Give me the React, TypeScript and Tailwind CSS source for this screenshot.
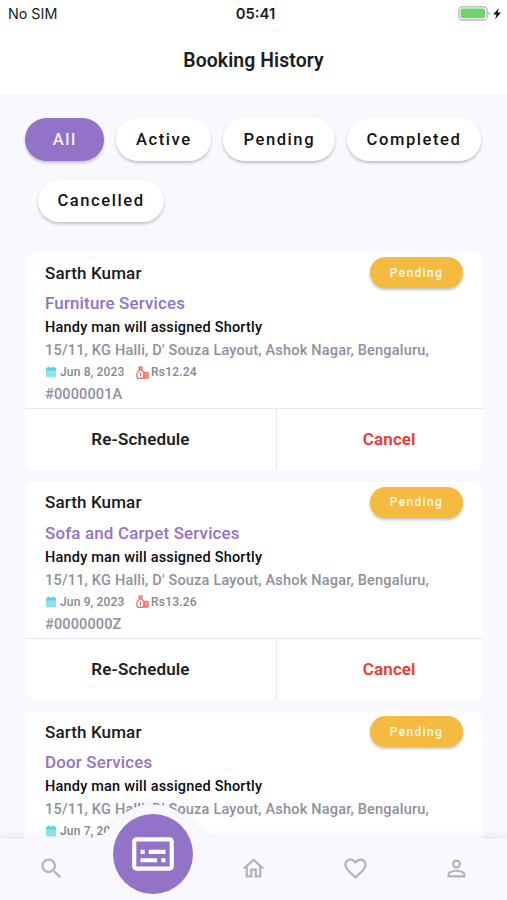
import React from "react";

type Booking = { name: string; service: string; date: string; price: string; id: string; editable: boolean };

const bookings: Booking[] = [
  { name: "Sarth Kumar", service: "Furniture Services", date: "Jun 8, 2023", price: "Rs12.24", id: "#0000001A", editable: true },
  { name: "Sarth Kumar", service: "Sofa and Carpet Services", date: "Jun 9, 2023", price: "Rs13.26", id: "#0000000Z", editable: true },
  { name: "Sarth Kumar", service: "Door Services", date: "Jun 7, 2023", price: "", id: "", editable: false },
];

const filters = [
  { label: "All", size: "w-[78.5px]", active: true },
  { label: "Active", size: "w-[95.5px]" },
  { label: "Pending", size: "w-[111.5px]" },
  { label: "Completed", size: "w-[134px]" },
  { label: "Cancelled", size: "w-[126px] ml-[12.5px]" },
];

function StatusBar() {
  return (
    <div className="grid h-7 grid-cols-3 items-center pl-2 pr-1 font-[Inter] text-[#1c1c1c]">
      <span className="text-[14.3px]">No SIM</span>
      <span className="text-center text-[14.8px] font-semibold">05:41</span>
      <div className="flex items-center justify-end">
        <svg width="45" height="18" viewBox="0 0 45 18">
          <rect x="0.8" y="1.8" width="28.4" height="13.2" rx="3.6" fill="#fff" stroke="#bcb9bf" strokeWidth="1.4" />
          <rect x="2.6" y="3.6" width="24.4" height="9.6" rx="1.6" fill="#6fd56c" />
          <path d="M30.6 6.6v4q1.4-.6 1.4-2t-1.4-2z" fill="#aaa" />
          <path d="M40.8 3l-5.6 6.4h3.3l-1.4 4.8 5.9-6.7h-3.4z" fill="#111" />
        </svg>
      </div>
    </div>
  );
}

function CalendarIcon() {
  return (
    <svg width="12" height="12" viewBox="0 0 12 12">
      <rect x="1" y="1.6" width="10" height="9.8" rx="1.6" fill="#8fe3ee" />
      <path d="M1 4.4V3.2q0-1.6 1.6-1.6h6.8q1.6 0 1.6 1.6v1.2z" fill="#5fd0df" />
      <path d="M3.4.6v2M8.6.6v2" stroke="#5fd0df" strokeWidth="1.2" />
    </svg>
  );
}

function MoneyIcon() {
  return (
    <svg width="13" height="13" viewBox="0 0 13 13" fill="none" stroke="#e8695c">
      <path d="M3.4 3.8C1.6 5.4.7 7.4.7 9.4c0 1.9 1 2.9 2.8 2.9h2.1c1.9 0 2.7-1 2.7-2.9 0-2-.9-4-2.7-5.6z" strokeWidth="1.2" />
      <path d="M3.4 3.6L2.8.9h3.6l-.8 2.7z" fill="#e8695c" fillOpacity=".5" />
      <path d="M4.5 6.4v4M3.6 7.2h1" />
      <rect x="7.8" y="6.2" width="4.6" height="6.1" rx=".6" fill="#e8695c" fillOpacity=".8" strokeWidth=".8" />
      <path d="M8.4 8.3h3.6M8.4 10.3h3.6" stroke="#fff" strokeOpacity=".6" strokeWidth=".5" />
    </svg>
  );
}

function BookingCard({ b }: { b: Booking }) {
  return (
    <article className="h-[218px] w-[457.5px] shrink-0 rounded-[10px] bg-white">
      <div className="flex h-[156px] flex-col pl-5 pr-5 pt-1.5 tracking-[0.2px]">
        <div className="flex h-[30px] items-center justify-between">
          <span className="pt-px text-[17px] font-medium tracking-[0.12px] text-[#1a1a1a]">{b.name}</span>
          <span className="-mt-px flex h-[31px] w-[93px] items-center justify-center rounded-full bg-[#f5bb41] pl-px text-[12px] font-medium tracking-[1.35px] text-[#fffaf0] shadow-[0_2px_3px_rgba(0,0,0,0.24)]">
            Pending
          </span>
        </div>
        <span className="text-[16.9px] font-medium leading-[30px] tracking-[0.18px] text-[#9273c8]">{b.service}</span>
        <span className="text-[14.5px] font-medium leading-5 text-[#0c0c0c]">Handy man will assigned Shortly</span>
        <span className="whitespace-nowrap text-[14.5px] font-medium leading-[25px] tracking-[0.2px] text-[#8e919c]">
          15/11, KG Halli, D' Souza Layout, Ashok Nagar, Bengaluru,
        </span>
        <div className="flex h-[18px] items-center text-[12px] font-medium tracking-[0.16px] text-[#858894]">
          <CalendarIcon />
          <span className="ml-[3px] w-[76px]">{b.date}</span>
          {b.price && (
            <>
              <MoneyIcon />
              <span className="ml-[2px] tracking-[0.2px]">{b.price}</span>
            </>
          )}
        </div>
        <span className="text-[14.5px] font-medium leading-[28px] tracking-[0.14px] text-[#8e919c]">{b.id}</span>
      </div>
      {b.editable && (
        <div className="flex h-[62px] border-t border-[#e9e9ec] text-[17px] font-semibold tracking-[0.15px]">
          <button className="w-[252px] border-r border-[#e9e9ec] pr-5 pt-px text-[#1f1f1f]">Re-Schedule</button>
          <button className="flex-1 pl-[19px] pt-px tracking-[0.1px] text-[#e8382f]">Cancel</button>
        </div>
      )}
    </article>
  );
}

function NavIcon({ d }: { d: string }) {
  return (
    <span className="flex h-[72px] items-center pl-px">
      <svg width="27" height="27" viewBox="0 0 24 24" fill="#b4b3b8">
        <path d={d} />
      </svg>
    </span>
  );
}

function BottomNav() {
  return (
    <nav className="absolute inset-x-0 bottom-0 h-[110px]">
      <svg className="absolute inset-0 drop-shadow-[0_-2px_4px_rgba(0,0,0,0.07)]" width="507" height="110" viewBox="0 0 507 110">
        <path d="M0 49H85C100 49 106 43 112 35.5A49.5 49.5 0 0 1 193 35.5C199 43 205 49 220 49H507V110H0Z" fill="#f8f8fe" />
      </svg>
      <div className="relative grid grid-cols-5 items-start justify-items-center pt-[24px]">
        <div className="pt-[18px]">
          <NavIcon d="M15.5 14h-.79l-.28-.27C15.41 12.59 16 11.11 16 9.5 16 5.91 13.09 3 9.5 3S3 5.91 3 9.5 5.91 16 9.5 16c1.61 0 3.09-.59 4.23-1.57l.27.28v.79l5 4.99L20.49 19l-4.99-5zm-6 0C7.01 14 5 11.99 5 9.5S7.01 5 9.5 5 14 7.01 14 9.5 11.99 14 9.5 14z" />
        </div>
        <span className="ml-px flex size-20 items-center justify-center rounded-full bg-[#9273c8]">
          <svg width="50" height="50" viewBox="0 0 24 24" fill="#fff">
            <path d="M20 4H4c-1.1 0-2 .9-2 2v12c0 1.100.9 2 2 2h16c1.1 0 2-.9 2-2V6c0-1.100-.9-2-2-2zm0 14H4V6h16v12zM6 10h2v2H6zm0 4h8v2H6zm10 0h2v2h-2zm-6-4h8v2h-8z" />
          </svg>
        </span>
        <div className="pt-[18px]">
          <NavIcon d="M12 5.69l5 4.5V18h-2v-6H9v6H7v-7.81l5-4.5M12 3L2 12h3v8h6v-6h2v6h6v-8h3L12 3z" />
        </div>
        <div className="pt-[18px]">
          <NavIcon d="M16.5 3c-1.74 0-3.41.81-4.5 2.09C10.91 3.81 9.24 3 7.5 3 4.42 3 2 5.42 2 8.5c0 3.78 3.4 6.86 8.55 11.54L12 21.35l1.45-1.32C18.6 15.36 22 12.28 22 8.5 22 5.42 19.58 3 16.5 3zm-4.4 15.55l-.1.1-.1-.1C7.14 14.24 4 11.39 4 8.5 4 6.5 5.5 5 7.5 5c1.54 0 3.04.99 3.57 2.36h1.87C13.46 5.99 14.96 5 16.5 5c2 0 3.5 1.5 3.5 3.5 0 2.89-3.14 5.74-7.9 10.05z" />
        </div>
        <div className="pt-[18px]">
          <NavIcon d="M12 5.9a2.1 2.1 0 110 4.2 2.1 2.1 0 010-4.2m0 9c2.97 0 6.1 1.46 6.1 2.1v1.1H5.9V17c0-.64 3.13-2.1 6.1-2.1M12 4C9.79 4 8 5.79 8 8s1.79 4 4 4 4-1.79 4-4-1.79-4-4-4zm0 9c-2.67 0-8 1.34-8 4v3h16v-3c0-2.66-5.33-4-8-4z" />
        </div>
      </div>
    </nav>
  );
}

export default function App() {
  return (
    <div className="relative h-[900px] w-[507px] overflow-hidden bg-[#f8f8fe] font-[Roboto,sans-serif]">
      <header className="h-[94px] bg-white">
        <StatusBar />
        <h1 className="pt-px text-center text-[19.4px] font-semibold leading-[64px] tracking-[0.1px] text-[#1c1c1c]">Booking History</h1>
      </header>
      <div className="flex flex-wrap gap-x-3 gap-y-[19px] pl-[25px] pt-6">
        {filters.map((f) => (
          <button
            key={f.label}
            className={`${f.size} h-[42.5px] rounded-full pl-px pt-0.5 text-[16.6px] font-medium tracking-[1.55px] shadow-[0_2px_3px_rgba(0,0,0,0.22)] ${
              f.active ? "bg-[#9273c8] text-[#f6effc]" : "bg-white text-[#141414]"
            }`}
          >
            {f.label}
          </button>
        ))}
      </div>
      <main className="mt-[30px] flex flex-col gap-[11.7px] pl-[25px]">
        {bookings.map((b) => (
          <BookingCard key={b.service} b={b} />
        ))}
      </main>
      <BottomNav />
    </div>
  );
}
